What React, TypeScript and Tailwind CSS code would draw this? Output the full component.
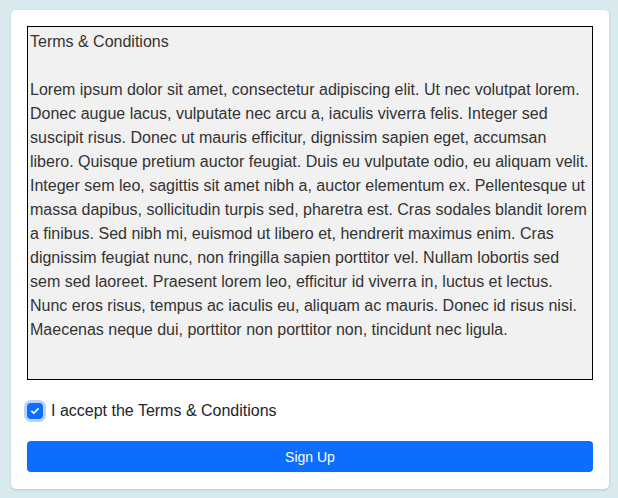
import React, { useState } from "react";

const terms =
  "Lorem ipsum dolor sit amet, consectetur adipiscing elit. Ut nec volutpat lorem. Donec augue lacus, vulputate nec arcu a, iaculis viverra felis. Integer sed suscipit risus. Donec ut mauris efficitur, dignissim sapien eget, accumsan libero. Quisque pretium auctor feugiat. Duis eu vulputate odio, eu aliquam velit. Integer sem leo, sagittis sit amet nibh a, auctor elementum ex. Pellentesque ut massa dapibus, sollicitudin turpis sed, pharetra est. Cras sodales blandit lorem a finibus. Sed nibh mi, euismod ut libero et, hendrerit maximus enim. Cras dignissim feugiat nunc, non fringilla sapien porttitor vel. Nullam lobortis sed sem sed laoreet. Praesent lorem leo, efficitur id viverra in, luctus et lectus. Nunc eros risus, tempus ac iaculis eu, aliquam ac mauris. Donec id risus nisi. Maecenas neque dui, porttitor non porttitor non, tincidunt nec ligula.";

export default function App() {
  const [accepted, setAccepted] = useState(true);

  return (
    <div
      className="min-h-[498px] bg-[#d9ebef] px-[11px] pt-[10px] text-[#212529]"
      style={{ fontFamily: '"Liberation Sans", Arial, sans-serif' }}
    >
      <div className="flex w-[598px] flex-col rounded-[5px] bg-white p-4 pb-[17px] shadow-[0_1px_3px_rgba(0,0,0,0.15)]">
        <div className="h-[354px] border border-black bg-[#f1f1f1] px-[2px] pt-[3px] text-base leading-6 text-[#333]">
          <p>Terms &amp; Conditions</p>
          <br />
          <p>{terms}</p>
        </div>

        <label className="mt-[19px] flex cursor-pointer items-center gap-2 text-base leading-6 text-[#212529]">
          <button
            type="button"
            onClick={() => setAccepted(!accepted)}
            className={`flex h-4 w-4 items-center justify-center rounded-[4px] ring-[3px] ring-[#b6d4fe] ${
              accepted ? "bg-[#0d6efd]" : "border border-gray-400 bg-white"
            }`}
          >
            {accepted && (
              <svg width="10" height="10" viewBox="0 0 16 16" fill="none">
                <path
                  d="M3 8.5l3.2 3L13 4.5"
                  stroke="white"
                  strokeWidth="2.6"
                  strokeLinecap="round"
                  strokeLinejoin="round"
                />
              </svg>
            )}
          </button>
          <span>I accept the Terms &amp; Conditions</span>
        </label>

        <button
          type="button"
          className="mt-[18px] h-[31px] w-full rounded-[4px] bg-[#0d6efd] text-sm text-white"
        >
          Sign Up
        </button>
      </div>
    </div>
  );
}
